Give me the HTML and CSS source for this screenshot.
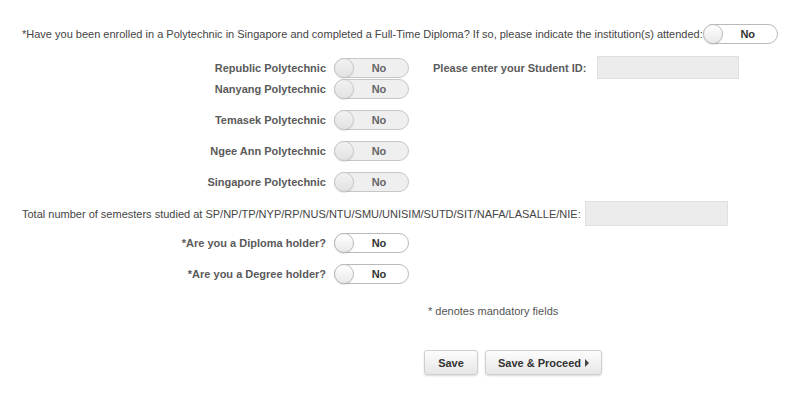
FILE: index.html
```html
<!DOCTYPE html>
<html>
<head>
<meta charset="utf-8">
<link rel="stylesheet" href="styles.css">
</head>
<body>
<div class="page">
  <div class="q1">
    <span class="q1-text">*Have you been enrolled in a Polytechnic in Singapore and completed a Full-Time Diploma? If so, please indicate the institution(s) attended:</span>
    <span class="toggle"><span class="knob"></span><span class="val">No</span></span>
  </div>

  <div class="poly">
    <div class="row row-first">
      <span class="label">Republic Polytechnic</span>
      <span class="toggle disabled"><span class="knob"></span><span class="val">No</span></span>
      <span class="sid-label">Please enter your Student ID:</span>
      <span class="input sid-input"></span>
    </div>
    <div class="row">
      <span class="label">Nanyang Polytechnic</span>
      <span class="toggle disabled"><span class="knob"></span><span class="val">No</span></span>
    </div>
    <div class="row">
      <span class="label">Temasek Polytechnic</span>
      <span class="toggle disabled"><span class="knob"></span><span class="val">No</span></span>
    </div>
    <div class="row">
      <span class="label">Ngee Ann Polytechnic</span>
      <span class="toggle disabled"><span class="knob"></span><span class="val">No</span></span>
    </div>
    <div class="row">
      <span class="label">Singapore Polytechnic</span>
      <span class="toggle disabled"><span class="knob"></span><span class="val">No</span></span>
    </div>
  </div>

  <div class="total">
    <span class="total-text">Total number of semesters studied at SP/NP/TP/NYP/RP/NUS/NTU/SMU/UNISIM/SUTD/SIT/NAFA/LASALLE/NIE:</span>
    <span class="input total-input"></span>
  </div>

  <div class="holders">
    <div class="row">
      <span class="label">*Are you a Diploma holder?</span>
      <span class="toggle"><span class="knob"></span><span class="val">No</span></span>
    </div>
    <div class="row">
      <span class="label">*Are you a Degree holder?</span>
      <span class="toggle"><span class="knob"></span><span class="val">No</span></span>
    </div>
  </div>

  <div class="note">* denotes mandatory fields</div>

  <div class="actions">
    <button class="btn">Save</button>
    <button class="btn">Save &amp; Proceed <span class="arrow"></span></button>
  </div>
</div>
</body>
</html>
```

FILE: styles.css
```css
html, body {
  margin: 0;
  padding: 0;
  background: #ffffff;
}

body {
  font-family: "Liberation Sans", Arial, sans-serif;
  font-size: 11px;
  color: #444;
}

.page {
  width: 800px;
  height: 406px;
  box-sizing: border-box;
  padding-top: 24px;
}

.q1 {
  display: flex;
  align-items: center;
  padding-left: 22px;
  height: 20px;
}

.q1-text {
  white-space: nowrap;
}

.toggle {
  position: relative;
  display: inline-flex;
  align-items: center;
  box-sizing: border-box;
  width: 75px;
  height: 20px;
  border: 1px solid #b9b9b9;
  border-radius: 10px;
  background: #ffffff;
  flex: none;
}

.toggle.disabled {
  background: #efefef;
  border-color: #c6c6c6;
}

.knob {
  box-sizing: border-box;
  width: 20px;
  height: 20px;
  margin-left: -1px;
  border-radius: 50%;
  border: 1px solid #bdbdbd;
  background: linear-gradient(#ffffff, #e9e9e9);
  box-shadow: 0 1px 1px rgba(0,0,0,0.12);
  flex: none;
}

.toggle.disabled .knob {
  background: linear-gradient(#f2f2f2, #e2e2e2);
  border-color: #c9c9c9;
}

.val {
  flex: 1;
  text-align: center;
  font-weight: bold;
  color: #333;
  padding-right: 4px;
}

.toggle.disabled .val {
  color: #666;
}

.poly {
  margin-top: 12px;
}

.row {
  display: flex;
  align-items: center;
  height: 20px;
  margin-bottom: 11px;
}

.row .label {
  width: 326px;
  text-align: right;
  font-weight: bold;
  color: #5a5a5a;
  margin-right: 8px;
  white-space: nowrap;
  flex: none;
}

.poly .row-first {
  height: 23px;
  margin-bottom: 0px;
}

.sid-label {
  margin-left: 24px;
  font-weight: bold;
  color: #5a5a5a;
  white-space: nowrap;
}

.input {
  display: inline-block;
  box-sizing: border-box;
  background: #ececec;
  border: 1px solid #e0e0e0;
  height: 23px;
}

.sid-input {
  width: 142px;
  margin-left: 11px;
}

.total {
  display: flex;
  align-items: center;
  padding-left: 22px;
  margin-top: -2px;
  height: 25px;
}

.total-text {
  white-space: nowrap;
}

.total-input {
  width: 143px;
  height: 25px;
  margin-left: 4px;
}

.holders {
  margin-top: 7px;
}

.note {
  margin-top: 21px;
  padding-left: 428px;
  color: #555;
}

.actions {
  display: flex;
  gap: 7px;
  padding-left: 424px;
  margin-top: 33px;
}

.btn {
  font-family: "Liberation Sans", Arial, sans-serif;
  font-size: 11px;
  font-weight: bold;
  color: #333;
  height: 25px;
  border: 1px solid #cfcfcf;
  border-radius: 3px;
  background: linear-gradient(#fdfdfd, #e6e6e6);
  box-shadow: 0 1px 2px rgba(0,0,0,0.15);
  display: inline-flex;
  align-items: center;
  justify-content: center;
  padding: 0;
}

.btn-save,
.btn:first-child {
  width: 54px;
}

.btn:last-child {
  width: 117px;
}

.arrow {
  display: inline-block;
  width: 0;
  height: 0;
  margin-left: 4px;
  border-top: 4px solid transparent;
  border-bottom: 4px solid transparent;
  border-left: 4px solid #444;
}
```
